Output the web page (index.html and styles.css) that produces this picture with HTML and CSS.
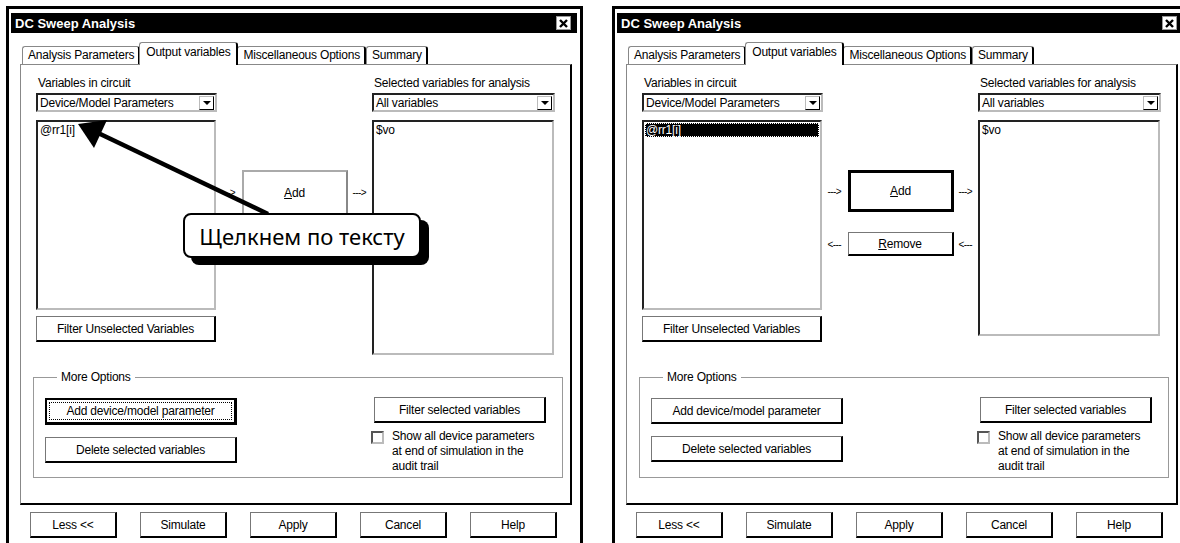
FILE: index.html
```html
<!DOCTYPE html>
<html lang="ru">
<head>
    <meta charset="UTF-8">
    <meta name="viewport" content="width=device-width, initial-scale=1.0">
    <title>DC Sweep Analysis</title>
    <link rel="stylesheet" href="styles.css">
</head>
<body>

    <div class="desk">

        <!-- first dialog: nothing selected yet -->
        <div class="window">
            <div class="titlebar">
                <span class="title">DC Sweep Analysis</span>
                <span class="close">
                    <svg width="9" height="9" viewBox="0 0 9 9"><path d="M1 1L8 8M8 1L1 8" stroke="#000" stroke-width="2.4"/></svg>
                </span>
            </div>

            <div class="tabs">
                <div class="tab">Analysis Parameters</div>
                <div class="tab active">Output variables</div>
                <div class="tab">Miscellaneous Options</div>
                <div class="tab">Summary</div>
            </div>

            <div class="panel">
                <div class="vars">
                    <div class="col">
                        <div class="label">Variables in circuit</div>
                        <div class="combo"><span>Device/Model Parameters</span><span class="drop"></span></div>
                        <div class="list list-left">
                            <div class="item">@rr1[i]</div>
                        </div>
                        <button class="btn btn-filter">Filter Unselected Variables</button>
                    </div>

                    <div class="mid">
                        <div class="move">
                            <span class="arr">---&gt;</span>
                            <button class="btn btn-move btn-add btn-flat"><u>A</u>dd</button>
                            <span class="arr">---&gt;</span>
                        </div>
                    </div>

                    <div class="col">
                        <div class="label">Selected variables for analysis</div>
                        <div class="combo combo-wide"><span>All variables</span><span class="drop"></span></div>
                        <div class="list list-right">
                            <div class="item">$vo</div>
                        </div>
                    </div>
                </div>

                <fieldset class="group">
                    <legend>More Options</legend>
                    <div class="group-left">
                        <button class="btn btn-opt btn-default"><span class="focus">Add device/model parameter</span></button>
                        <button class="btn btn-opt">Delete selected variables</button>
                    </div>
                    <div class="group-right">
                        <button class="btn btn-sel">Filter selected variables</button>
                        <div class="check">
                            <span class="box"></span>
                            <span class="check-text">Show all device parameters at end of simulation in the audit trail</span>
                        </div>
                    </div>
                </fieldset>
            </div>

            <div class="footer">
                <button class="btn btn-foot">Less &lt;&lt;</button>
                <button class="btn btn-foot">Simulate</button>
                <button class="btn btn-foot">Apply</button>
                <button class="btn btn-foot">Cancel</button>
                <button class="btn btn-foot">Help</button>
            </div>
        </div>

        <!-- second dialog: variable selected, Remove appears -->
        <div class="window">
            <div class="titlebar">
                <span class="title">DC Sweep Analysis</span>
                <span class="close">
                    <svg width="9" height="9" viewBox="0 0 9 9"><path d="M1 1L8 8M8 1L1 8" stroke="#000" stroke-width="2.4"/></svg>
                </span>
            </div>

            <div class="tabs">
                <div class="tab">Analysis Parameters</div>
                <div class="tab active">Output variables</div>
                <div class="tab">Miscellaneous Options</div>
                <div class="tab">Summary</div>
            </div>

            <div class="panel">
                <div class="vars">
                    <div class="col">
                        <div class="label">Variables in circuit</div>
                        <div class="combo"><span>Device/Model Parameters</span><span class="drop"></span></div>
                        <div class="list list-left">
                            <div class="item selected"><span>@rr1[i]</span></div>
                        </div>
                        <button class="btn btn-filter">Filter Unselected Variables</button>
                    </div>

                    <div class="mid">
                        <div class="move">
                            <span class="arr">---&gt;</span>
                            <button class="btn btn-move btn-add btn-strong"><u>A</u>dd</button>
                            <span class="arr">---&gt;</span>
                        </div>
                        <div class="move move-back">
                            <span class="arr">&lt;---</span>
                            <button class="btn btn-move btn-remove"><u>R</u>emove</button>
                            <span class="arr">&lt;---</span>
                        </div>
                    </div>

                    <div class="col">
                        <div class="label">Selected variables for analysis</div>
                        <div class="combo combo-wide"><span>All variables</span><span class="drop"></span></div>
                        <div class="list list-right list-short">
                            <div class="item">$vo</div>
                        </div>
                    </div>
                </div>

                <fieldset class="group">
                    <legend>More Options</legend>
                    <div class="group-left">
                        <button class="btn btn-opt">Add device/model parameter</button>
                        <button class="btn btn-opt">Delete selected variables</button>
                    </div>
                    <div class="group-right">
                        <button class="btn btn-sel">Filter selected variables</button>
                        <div class="check">
                            <span class="box"></span>
                            <span class="check-text">Show all device parameters at end of simulation in the audit trail</span>
                        </div>
                    </div>
                </fieldset>
            </div>

            <div class="footer">
                <button class="btn btn-foot">Less &lt;&lt;</button>
                <button class="btn btn-foot">Simulate</button>
                <button class="btn btn-foot">Apply</button>
                <button class="btn btn-foot">Cancel</button>
                <button class="btn btn-foot">Help</button>
            </div>
        </div>

    </div>

    <!-- annotation over the first dialog -->
    <svg class="pointer" width="1180" height="543" viewBox="0 0 1180 543">
        <line x1="96" y1="132" x2="268" y2="214" stroke="#000" stroke-width="4.5"/>
        <polygon points="78,124 107,120 94,148" fill="#000"/>
    </svg>
    <div class="callout">Щелкнем по тексту</div>

</body>
</html>
```

FILE: styles.css
```css
* {
    box-sizing: border-box;
}

body {
    margin: 0;
    height: 543px;
    overflow: hidden;
    position: relative;
    background-color: #fff;
    color: #000;
    font-family: "Liberation Sans", Arial, sans-serif;
    font-size: 12px;
    letter-spacing: -0.2px;
}

.desk {
    display: flex;
    gap: 29px;
    padding: 6px 0 0 6px;
}

.window {
    flex: none;
    width: 577px;
    height: 560px;
    border: 3px solid #000;
    padding: 4px 3px 0 2px;
    background-color: #fff;
}

/* title bar */
.titlebar {
    height: 20px;
    background-color: #000;
    color: #fff;
    display: flex;
    align-items: center;
    justify-content: space-between;
    padding: 0 6px 0 4px;
}

.title {
    font-weight: bold;
    font-size: 13px;
    letter-spacing: 0;
}

.close {
    width: 15px;
    height: 14px;
    background-color: #fff;
    border: 1px solid #999;
    display: flex;
    align-items: center;
    justify-content: center;
}

/* tabs */
.tabs {
    display: flex;
    align-items: flex-end;
    height: 32px;
    margin-bottom: -1px;
    padding-left: 11px;
    position: relative;
    z-index: 1;
}

.tab {
    height: 18px;
    margin-bottom: 1px;
    padding: 0 4px 0 5px;
    border: 1px solid #888;
    border-bottom: none;
    border-right: 2px solid #000;
    border-radius: 3px 3px 0 0;
    background-color: #fff;
    line-height: 16px;
    white-space: nowrap;
}

.tab.active {
    height: 23px;
    margin: 0 -1px 0 -1px;
    padding: 0 6px;
    line-height: 18px;
    position: relative;
    z-index: 2;
}

/* tab page */
.panel {
    margin-left: 9px;
    width: 552px;
    height: 441px;
    border-top: 1px solid #888;
    border-left: 1px solid #888;
    border-right: 2px solid #000;
    border-bottom: 2px solid #000;
    padding: 11px 0 0 12px;
}

.vars {
    display: grid;
    grid-template-columns: 181px 155px 183px;
    margin-left: 3px;
    height: 279px;
}

.col {
    display: flex;
    flex-direction: column;
    align-items: flex-start;
}

.label {
    height: 14px;
    line-height: 14px;
    padding-left: 2px;
    margin-bottom: 3px;
    white-space: nowrap;
}

.combo {
    width: 181px;
    height: 19px;
    display: flex;
    align-items: center;
    justify-content: space-between;
    border: 2px solid;
    border-color: #222 #bbb #bbb #222;
    padding: 0 1px 0 2px;
}

.combo-wide {
    width: 183px;
}

.drop {
    width: 15px;
    height: 14px;
    border: 1px solid;
    border-color: #bbb #000 #000 #bbb;
    display: flex;
    align-items: center;
    justify-content: center;
}

.drop::after {
    content: "";
    border-left: 4px solid transparent;
    border-right: 4px solid transparent;
    border-top: 4px solid #000;
}

.list {
    margin-top: 8px;
    border: 2px solid;
    border-color: #222 #bbb #bbb #222;
    padding: 1px 0 0 1px;
}

.list-left {
    width: 180px;
    height: 190px;
}

.list-right {
    width: 182px;
    height: 235px;
}

.list-short {
    height: 216px;
}

.item {
    height: 14px;
    line-height: 14px;
    padding-left: 1px;
}

.item.selected {
    width: 174px;
    background-color: #000;
    color: #fff;
    outline: 1px dotted #fff;
    outline-offset: -1px;
}

/* buttons */
.btn {
    font: inherit;
    letter-spacing: inherit;
    color: #000;
    background-color: #fff;
    height: 26px;
    padding: 0;
    border: 1px solid #777;
    border-right: 2px solid #000;
    border-bottom: 2px solid #000;
    white-space: nowrap;
}

.btn-filter {
    width: 180px;
    margin-top: 6px;
}

.btn-default {
    border: 2px solid #000;
    border-right-width: 3px;
    border-bottom-width: 3px;
    padding: 2px;
}

.focus {
    display: block;
    height: 100%;
    line-height: 17px;
    border: 1px dotted #000;
}

.mid {
    padding-top: 94px;
    display: flex;
    flex-direction: column;
    gap: 20px;
}

.move {
    display: flex;
    align-items: center;
    justify-content: center;
    gap: 5px;
}

.arr {
    font-size: 10px;
    letter-spacing: -0.6px;
    width: 15px;
}

.btn-move {
    width: 106px;
    height: 24px;
}

.btn-add {
    height: 45px;
}

.btn-flat {
    border: 2px solid #aaa;
    border-right-color: #888;
    border-bottom-color: #888;
}

.btn-strong {
    height: 42px;
    border: 3px solid #000;
}

/* more options */
.group {
    margin: 15px 0 0 0;
    width: 530px;
    height: 108px;
    border: 1px solid #999;
    padding: 14px 16px 0 11px;
    display: flex;
    justify-content: space-between;
}

.group legend {
    margin-left: 12px;
    padding: 0 4px;
    line-height: 14px;
}

.group-left {
    display: flex;
    flex-direction: column;
    gap: 12px;
}

.btn-opt {
    width: 192px;
    height: 26px;
}

.btn-default.btn-opt {
    height: 27px;
}

.group-right {
    display: flex;
    flex-direction: column;
    align-items: flex-end;
    margin-top: -1px;
}

.btn-sel {
    width: 172px;
}

.check {
    display: flex;
    gap: 8px;
    margin-top: 6px;
    width: 175px;
}

.box {
    flex: none;
    width: 13px;
    height: 13px;
    margin-top: 2px;
    border: 2px solid;
    border-color: #555 #bbb #bbb #555;
}

.check-text {
    line-height: 15px;
}

/* bottom row */
.footer {
    display: flex;
    gap: 23px;
    margin-top: 7px;
    padding-left: 19px;
}

.btn-foot {
    width: 87px;
}

/* annotation */
.pointer {
    position: absolute;
    left: 0;
    top: 0;
    pointer-events: none;
}

.callout {
    position: absolute;
    left: 183px;
    top: 213px;
    width: 238px;
    height: 45px;
    border: 2px solid #000;
    border-radius: 8px;
    background-color: #fff;
    box-shadow: 8px 7px 0 #000;
    display: flex;
    align-items: center;
    justify-content: center;
    font-family: "Noto Sans", sans-serif;
    font-size: 22px;
    letter-spacing: 0;
}
```
